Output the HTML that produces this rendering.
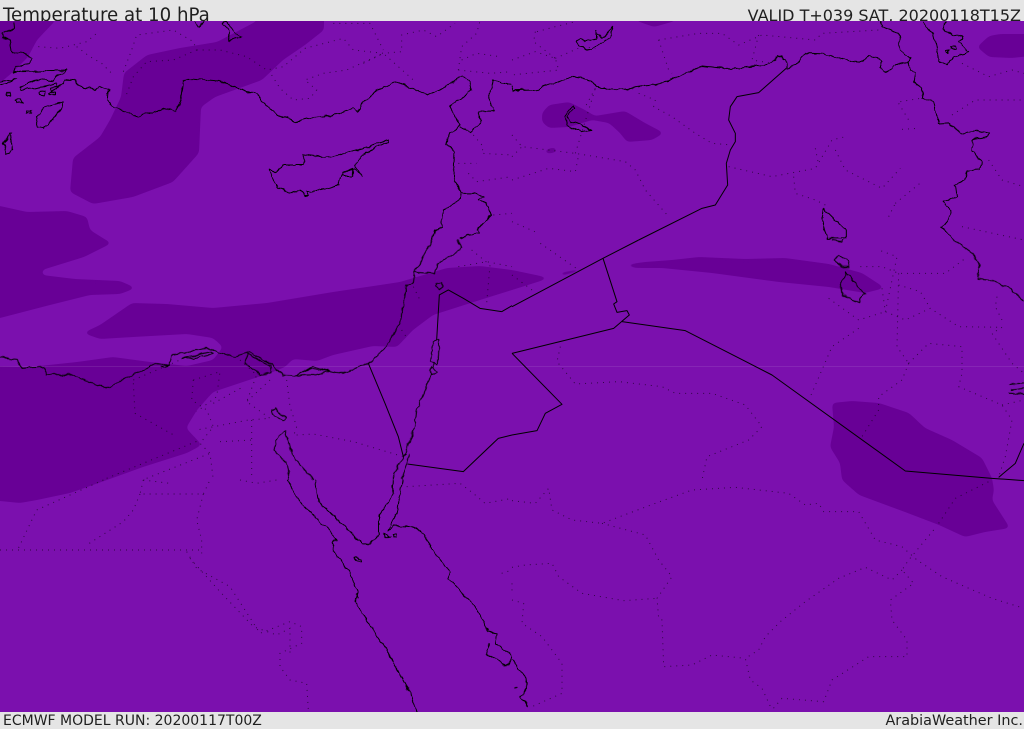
<!DOCTYPE html>
<html><head><meta charset="utf-8"><title>Temperature at 10 hPa</title>
<style>
html,body{margin:0;padding:0;width:1024px;height:729px;overflow:hidden;background:#7b10ae}
svg{position:absolute;left:0;top:0}
.bar{position:absolute;left:0;width:1024px;background:#e5e5e5;overflow:hidden;color:#1f1f1f;font-family:"DejaVu Sans","Liberation Sans",sans-serif;white-space:nowrap}
#top{top:0;height:21px}
#bot{top:712px;height:17px}
.bar span{position:absolute}
#top .l{top:4px;left:3px;font-size:18.2px;line-height:24px}
#top .r{top:4px;right:3px;font-size:16px;line-height:24px}
#bot .l{top:1px;left:3px;font-size:14px;line-height:17px}
#bot .r{top:1px;right:1px;font-size:14.4px;line-height:17px}
.c *,.c{fill:none;stroke:#000;stroke-width:1;stroke-linejoin:round;vector-effect:non-scaling-stroke}
.d *,.d{fill:none;stroke:#000;stroke-width:1;stroke-dasharray:1 5;vector-effect:non-scaling-stroke;opacity:.85}
</style></head><body>
<svg width="1024" height="729" viewBox="0 0 1024 729">
<defs>
<filter id="s" filterUnits="userSpaceOnUse" x="-40" y="-40" width="1104" height="809"><feGaussianBlur stdDeviation="2.5"/><feComponentTransfer><feFuncA type="linear" slope="12" intercept="-5.5"/></feComponentTransfer></filter>
<filter id="w" filterUnits="userSpaceOnUse" x="-10" y="0" width="1044" height="729"><feTurbulence type="fractalNoise" baseFrequency=".12" numOctaves="2" seed="4" result="n"/><feDisplacementMap in="SourceGraphic" in2="n" scale="5" xChannelSelector="R" yChannelSelector="G"/></filter>
</defs>
<rect width="1024" height="729" fill="#7b10ae"/>
<g fill="#670096" filter="url(#s)">
<polygon points="257,0 324,0 324,30 305,45 283,60 262,80 215,97 201,107 199,153 173,182 133,197 93,204 70,192 73,158 100,137 110,120 121,97 124,73 147,55 180,48 217,42 257,21"/>
<polygon points="-20,-10 58,-10 55,21 37,40 28,57 13,72 0,83 -20,90"/>
<polygon points="-20,204 0,206 27,212 67,211 87,217 90,230 106,240 112,243 84,257 42,270 42,275 75,279 120,281 136,288 120,294 90,295 50,305 0,318 -20,322"/>
<polygon points="-20,366 30,367 77,362 113,357 150,362 187,366 213,360 223,347 213,338 187,334 133,337 100,339 83,333 100,325 132,303 167,304 213,308 267,303 333,292 400,282 447,268 480,266 512,270 550,278 512,290 480,300 433,315 413,330 397,347 373,346 333,355 317,361 293,359 285,367 273,372 240,383 213,392 197,410 186,428 202,445 187,453 143,467 107,480 70,493 37,500 20,503 0,501 -20,500"/>
<polygon points="622,265 645,262 672,260 699,257 745,259 785,258 829,264 862,273 885,288 865,293 829,287 779,282 712,273 662,268 635,268"/>
<polygon points="832,403 852,401 879,403 909,413 925,428 952,440 982,458 992,478 994,490 992,500 1010,528 985,532 965,537 939,525 905,512 859,495 842,480 840,463 830,447 834,427"/>
<polygon points="542,113 549,105 569,102 585,110 595,116 625,111 645,123 664,133 652,140 627,142 620,133 609,123 592,120 569,127 549,128 542,122"/>
<polygon points="977,47 989,36 1000,34 1040,34 1040,55 1012,58 989,57"/>
<polygon points="632,10 680,10 675,21 654,27 637,21"/>
<polygon points="544,150 555,147 558,152 546,154"/>
<polygon points="558,273 581,268 578,272 562,276"/>
</g>
<rect x="0" y="366" width="1024" height="1" fill="#fff" opacity=".09"/>

<g class="d">
<g transform="scale(.33333)">
<path d="M115 140L180 145 260 125 290 100M230 140L270 170 305 190 340 225M370 215L395 150 410 105 520 90 580 125 590 150 520 180 440 185 400 230 375 295M590 150L660 150 740 170 800 210 850 200 915 145 1030 115 1060 150 1150 160 1205 155 1205 105 1270 90 1310 110 1365 70M815 225L840 265 880 300 930 295 950 270 915 240 970 220 1040 210 1150 160 1240 240M1090 190L1150 160M1000 70L1110 70 1150 150M1375 210L1385 140 1430 100 1440 63M1385 180L1430 160 1500 170M1375 210L1470 220 1536 215M1420 405L1450 440 1445 460 1536 465M1375 490L1430 490M1405 520L1430 545 1536 530M1480 645L1536 640"/>
</g>
<g transform="translate(512,0) scale(.33333)">
<path d="M0 180L70 155 130 175 140 210 0 225M75 95L130 80 190 65M70 95L65 125 130 175M130 175L210 140 250 145M440 120L470 210 480 220M440 120L560 100 630 100 680 135 750 105 910 120 930 100 1100 90M740 105L720 180 780 190M250 265L220 320M380 280L430 300 425 320 480 350 550 400 600 430 660 435M0 405L30 440 190 460 340 485 370 510 400 570 470 650M0 470L30 440M0 540L110 505 190 515 200 465M190 460L250 265M650 500L780 530 910 505 960 420 1000 410M910 445L920 495M970 450L1000 510 1110 565 1165 505M845 530L850 580 910 600 950 620M1150 610L1230 545M1130 650L1150 610M1165 305L1225 295M1160 310L1190 360M1170 388L1220 385M1320 345L1390 300 1530 300M1350 190L1430 230 1500 210 1536 220M1430 480L1470 540 1536 560M1350 680L1536 720M0 665L80 700"/>
</g>
<g transform="translate(0,240) scale(.33333)">
<path d="M1375 80L1460 65 1536 80M1415 30L1470 75 1460 190M1240 140L1260 180M1205 270L1225 300M400 430L405 520 530 590M400 420L540 360M580 420L575 480 620 510 640 560 600 610 630 640 640 720M580 420L660 395 650 470 590 515M720 360L770 405 740 485 810 535 745 540 590 570M810 420L740 485M860 420L870 500 890 560 880 590M755 540L755 720M660 605L760 600M640 490L730 440M890 585L940 582 1060 605 1210 650M320 715L600 600M440 715L630 640"/>
</g>
<g transform="translate(512,240) scale(.33333)">
<path d="M85 10L200 90M0 105L60 150M145 320L135 365 190 432 320 425 450 440 490 460 600 460 700 495 750 560 710 600 585 650 570 720M1040 265L960 320 895 470M950 175L1040 240 1120 215M1120 215L1155 50 1100 30M1110 145L1120 215 1180 240 1255 205 1340 260 1470 262M1045 80L1110 80 1160 100 1300 100 1360 55M1160 100L1155 320 1190 370M1160 135L1225 155 1255 205M1190 370L1250 310 1350 320 1350 400 1340 440 1470 495 1500 540 1480 650 1460 710M1190 370L1170 420 1100 470 1100 510 1050 590M1470 262L1440 280 1500 370 1536 400M1470 495L1536 480M1455 170L1450 200 1470 240"/>
</g>
<g transform="translate(0,480) scale(.33333)">
<path d="M0 210L600 210M430 0L420 42 610 42 630 0M420 42L400 90 370 125 260 195M310 0L110 90 55 205M610 42L590 120 605 180 605 220M560 215L590 265 690 320 780 460 870 425 905 440 905 490 840 520 840 560 870 600 920 610 925 690M570 235L660 335 760 440 830 465 870 445 870 520M1220 20L1380 10 1420 40 1455 70 1536 55M430 0L510 10M720 0L770 10 830 0M1505 280L1536 270M1536 310L1536 345"/>
</g>
<g transform="translate(512,480) scale(.33333)">
<path d="M0 62L70 70 110 25 120 90 180 120 270 130 430 70 540 30 670 22 830 40 880 75 920 70 935 95 1040 95 1090 180 1170 200 1215 240 1290 290 1440 355 1536 385M1265 150L1190 240 1170 270 1205 310 1135 360 1140 420 1185 480 1185 530 1070 530 960 600 935 665 810 655 780 690M1170 270L1140 300 1060 262 980 295 880 365 805 425 760 470 740 510 700 535 715 600 750 625 780 690M1280 130L1330 55 1440 0M270 130L400 165 440 240 480 290 435 355 440 415 450 420 455 560 540 555 600 525 700 535M0 262L40 255 120 250 140 290 210 340 335 362 435 355M0 360L35 370 30 430 90 470 150 550 150 640 60 680"/>
</g>
</g>

<!-- straight political borders -->
<g class="c">
<g transform="translate(512,0) scale(.33333)">
<path d="M825 203L740 278 675 290 655 320 650 360 670 400 670 425 655 450 643 490 647 555 610 615 570 625 380 720"/>
</g>
<g transform="translate(0,240) scale(.33333)">
<path d="M1505 215L1440 205 1390 175 1345 150 1318 165 1310 300M1505 215L1536 197"/>
<path d="M1105 370L1155 490 1165 515 1195 590 1210 650"/>
<path d="M1222 672L1390 695 1495 595 1536 585"/>
</g>
<g transform="translate(512,240) scale(.33333)">
<path d="M380 0L273 55 0 200M273 55L315 185 305 192 315 217 345 212 352 225 305 265 0 340M0 340L150 493 100 520 75 572 0 585"/>
<path d="M330 245L520 272 780 405 1180 693 1440 715 1536 722M1460 712L1510 670 1536 610"/>
</g>
</g>

<!-- coastlines -->
<g class="c" filter="url(#w)">
<g transform="scale(.33333)">
<path d="M148 280L190 250 192 240 220 242 250 262 285 270 300 258 325 268 322 300 345 322 400 345 420 348 490 325 525 335 537 315 545 290 550 245 565 235 660 243 700 258 770 285 800 315 830 345 890 365 940 353 1010 345 1060 325 1070 335 1090 310 1130 270 1190 245 1280 285 1320 270 1385 228 1410 245 1415 270 1350 320 1380 375 1350 395 1340 435 1365 455 1362 530 1382 580 1380 598 1330 630 1325 680 1305 690 1297 720"/>
<path d="M1380 380L1410 395 1440 370 1438 335 1485 335 1465 295 1480 240 1536 255"/>
<path d="M1382 580L1430 580 1450 590 1435 600 1460 610 1475 645 1430 690 1440 700 1400 705 1380 720"/>
<path d="M1165 420L1090 445 1020 465 970 472 912 463 908 495 850 495 825 518 808 510 820 540 835 565 875 578 900 570 915 588 925 588 920 575 975 568 1015 555 1030 520 1065 505 1090 530 1065 495 1090 462 1165 425Z"/>
<path d="M1028 517L1060 505 1058 528 1030 528Z"/>
<path d="M190 305L130 325 108 350 115 380 130 385 160 360 185 325Z"/>
<path d="M35 397L30 400 24 420 10 430 20 460 38 452 30 430Z"/>
<path d="M40 63L42 85 5 100 5 115 30 120 35 160 60 155 95 175 85 190 45 200 38 220 65 215 200 210 165 230 160 245 110 240 58 262 60 268 90 268 155 255 170 250 172 260 150 265 155 275"/>
<path d="M0 245L50 235 20 250 0 255M20 277H32V284H20ZM45 298L60 300 68 310 50 308ZM80 332H95V338H80ZM118 275L133 272 133 288 120 285ZM150 278H165V284H150Z"/>
<path d="M585 63L595 85 610 63M665 70L680 67 722 112 690 122 682 85Z"/>
</g>
<g transform="translate(512,0) scale(.33333)">
<path d="M0 260L5 272 70 270 110 255 180 230 230 238 265 265 335 268 430 255 490 235 570 198 640 205 690 205 770 190 800 168 820 178 825 203 850 195 885 158 935 160 1010 182 1045 185 1075 167 1110 180 1102 200 1120 220 1165 188 1190 190 1195 210 1210 215 1205 245 1232 265 1230 295 1265 305 1280 372 1310 370 1345 400 1395 392 1432 400 1425 410 1380 420 1378 450 1408 485 1405 510 1365 512 1360 540 1330 555 1335 590 1295 605 1315 630 1310 660 1288 685 1325 720"/>
<path d="M1108 63L1110 80 1160 100 1165 150 1195 175 1190 190"/>
<path d="M1237 63L1240 85 1265 100 1280 180 1305 197 1325 170 1370 158 1340 125 1350 110 1300 95 1290 85 1305 63"/>
<path d="M1303 152L1312 150 1310 162ZM1316 138H1330V145H1316Z"/>
<path d="M183 318L158 350 165 375 205 395 240 390 215 378 175 365 165 350 188 325Z"/>
<path d="M192 122L205 115 220 125 255 115 255 95 270 115 305 80 295 110 235 150 200 140Z"/>
<path d="M935 625L930 660 945 715 1000 715 1000 690 960 650Z"/>
</g>
<g transform="translate(0,240) scale(.33333)">
<path d="M1297 0L1245 95 1240 130 1220 140 1200 250 1150 330 1105 370 1020 400 990 395 940 380 880 408 850 405 815 375 750 335 700 350 620 325 515 345 510 375 470 368 320 445 280 430 215 405 140 403 130 380 65 385 50 358 0 352"/>
<path d="M1245 95L1305 100 1312 70 1385 25 1372 0"/>
<path d="M545 355L630 335 635 342 570 355Z"/>
<path d="M735 370L745 340 810 378 812 398 780 408 770 395Z"/>
<path d="M880 408L935 385 990 395 945 405 925 405Z"/>
<path d="M480 378L505 376 495 383Z"/>
<path d="M1312 128L1325 128 1327 145 1318 152 1308 140Z"/>
<path d="M1300 305L1318 300 1312 370 1290 365ZM1295 380L1310 395 1295 405 1285 390ZM1300 370V380"/>
<path d="M1295 405L1250 510 1245 560 1210 650"/>
<path d="M1215 645L1180 700 1180 720M1228 640L1205 720"/>
<path d="M855 570L830 600 822 630 860 670 868 720M855 570L880 650 940 720"/>
<path d="M815 510L830 505 855 535 850 542 825 530Z"/>
</g>
<g transform="translate(512,240) scale(.33333)">
<path d="M1325 0L1375 35 1405 75 1395 115 1440 120 1490 145 1536 185"/>
<path d="M965 60L980 45 1010 65 1010 80 990 80ZM1002 95L1005 105 985 130 990 165 1040 185 1060 160 1035 135 1015 110ZM960 0L990 5 995 0"/>
<path d="M1490 435L1536 430M1495 450L1536 445M1490 458L1536 460"/>
</g>
<g transform="translate(0,480) scale(.33333)">
<path d="M865 0L900 65 990 155 1010 180 995 185 1000 210 1050 280 1075 335 1065 365 1160 510 1225 630 1250 695"/>
<path d="M945 0L955 65 1010 115 1085 190 1110 190 1140 160 1140 105 1178 40 1180 0"/>
<path d="M1208 0L1190 100 1165 150 1180 138 1240 140 1265 155 1310 230 1350 275 1345 295 1430 385 1465 455 1490 460 1485 490 1536 530"/>
<path d="M1470 490L1458 520 1520 560 1536 530M1150 160L1170 170 1152 170ZM1178 165H1188V172H1178ZM1062 232L1080 235 1082 243 1065 238ZM1070 340L1075 355"/>
</g>
<g transform="translate(512,480) scale(.33333)">
<path d="M0 540L40 590 45 625 25 650 50 678M10 625H15"/>
</g>
</g>
</svg>
<div class="bar" id="top"><span class="l">Temperature at 10 hPa</span><span class="r">VALID T+039 SAT, 20200118T15Z</span></div>
<div class="bar" id="bot"><span class="l">ECMWF MODEL RUN: 20200117T00Z</span><span class="r">ArabiaWeather Inc.</span></div>
</body></html>
